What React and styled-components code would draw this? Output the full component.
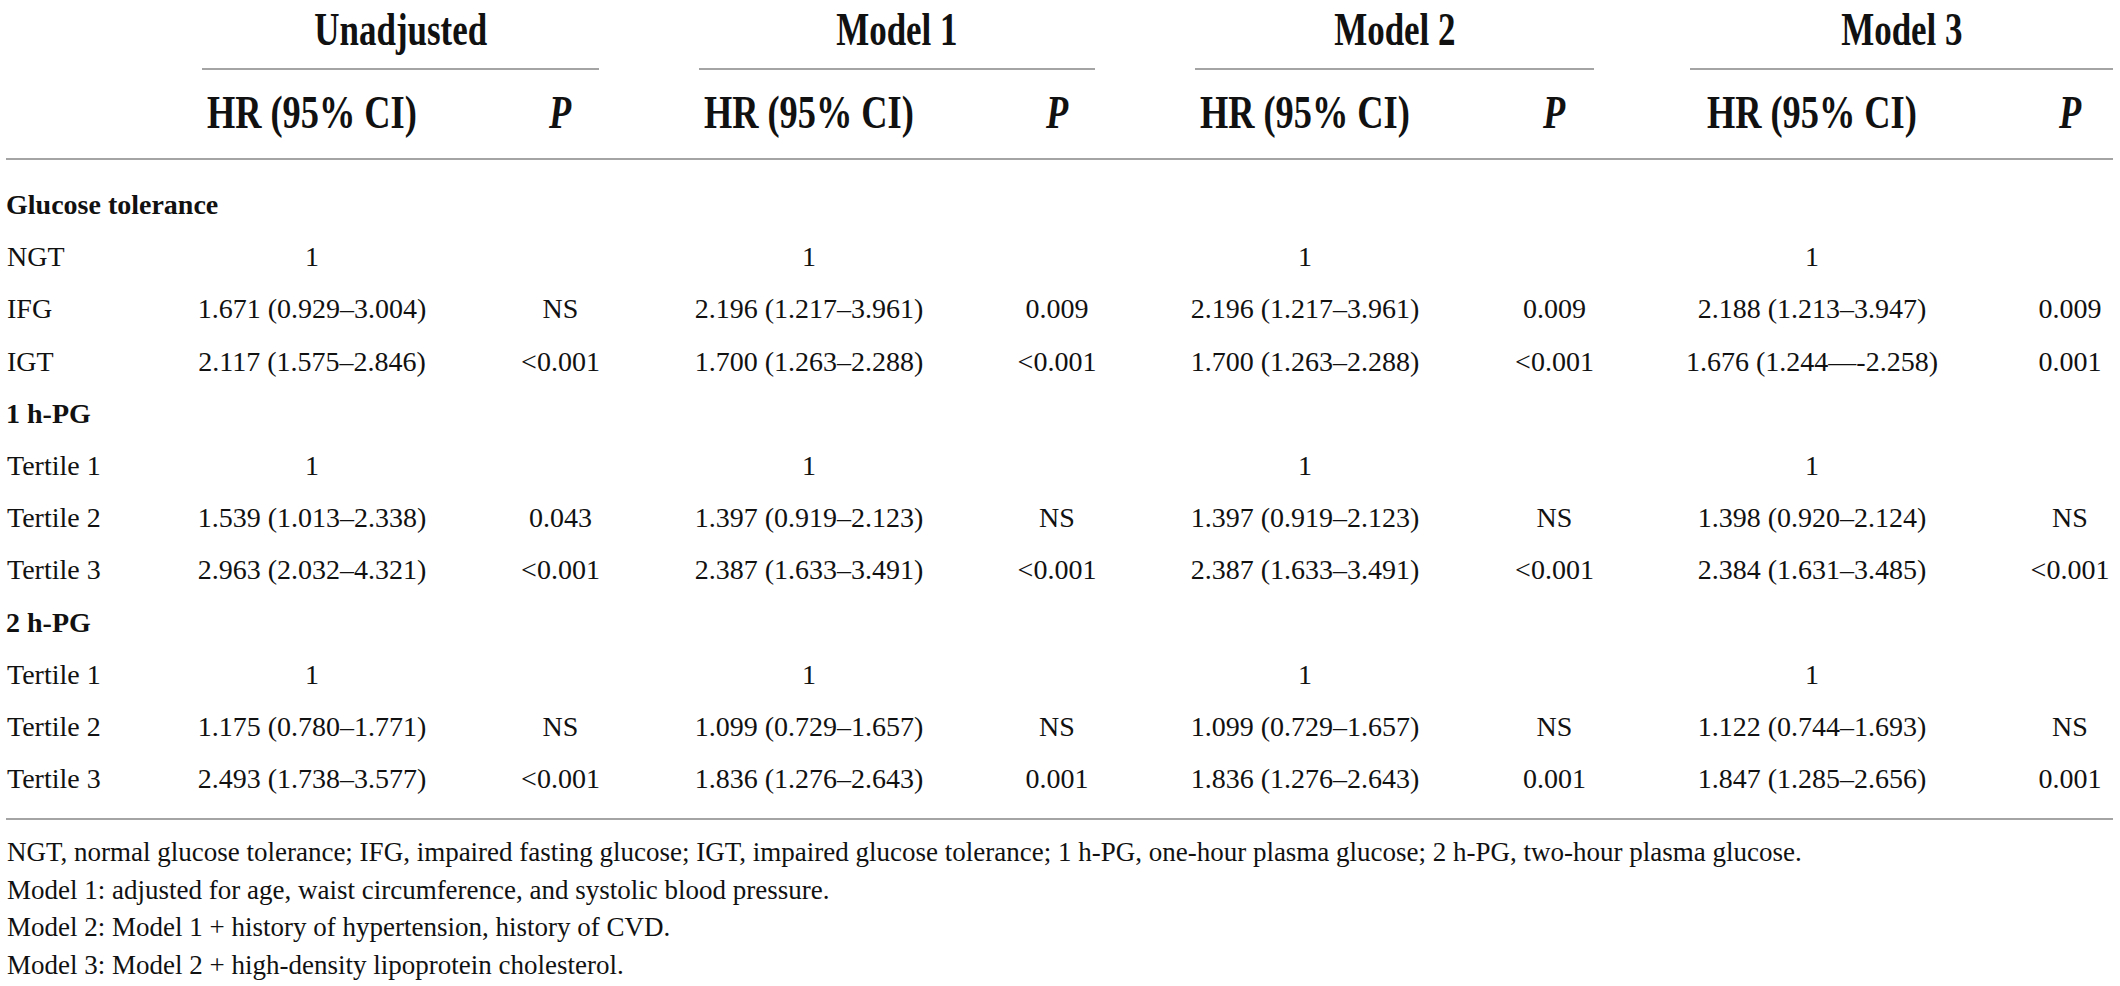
import React from 'react';
import styled, { createGlobalStyle } from 'styled-components';

const ink = '#111';
const rule = '#a4a4a4';
const serif = `"Liberation Serif", "Times New Roman", serif`;

const GlobalStyle = createGlobalStyle`
  html, body {
    margin: 0;
    padding: 0;
    background: #fff;
    overflow: hidden;
  }
  body {
    font-family: ${ serif };
    color: ${ ink };
  }
`;

const Page = styled.div`
  width: 2120px;
  box-sizing: border-box;
  padding: 0 7px 0 6px;
`;

const Table = styled.div`
  display: grid;
  grid-template-columns: 146px 320px 177px 320px 176px 320px 179px 336px 133px;
  font-size: 28px;
  white-space: nowrap;
`;

const Corner = styled.div`
  grid-row: span 2;
`;

const GroupHead = styled.div`
  grid-column: span 2;
  margin: ${ (p) => (p.$last ? '0 0 0 46px' : '0 50px') };
  height: 68px;
  border-bottom: 2px solid ${ rule };
  display: flex;
  justify-content: center;
  align-items: flex-start;
`;

const GroupTitle = styled.span`
  display: inline-block;
  font-size: 46px;
  font-weight: 700;
  line-height: 60px;
  transform: scaleX(0.76);
`;

const ColHead = styled.div`
  height: 88px;
  box-sizing: border-box;
  display: flex;
  justify-content: center;
  align-items: center;
  padding: 0 0 3px ${ (p) => (p.$edge ? '47px' : '0') };
`;

const ColTitle = styled.span`
  display: inline-block;
  font-size: 46px;
  font-weight: 700;
  font-style: ${ (p) => (p.$italic ? 'italic' : 'normal') };
  transform: scaleX(0.79);
`;

const FullRule = styled.div`
  grid-column: 1 / -1;
  height: 2px;
  background: ${ rule };
  margin: ${ (p) => p.$space };
`;

const Body = styled.div`
  grid-column: 1 / -1;
  display: grid;
  grid-template-columns: subgrid;
  padding-top: 19px;
`;

const Section = styled.div`
  grid-column: 1 / -1;
  font-weight: 700;
  line-height: 52.2px;
`;

const Label = styled.div`
  line-height: 52.2px;
  padding-left: 1px;
`;

const Cell = styled.div`
  line-height: 52.2px;
  text-align: center;
  padding-left: ${ (p) => (p.$edge ? '47px' : '0') };
`;

const Notes = styled.div`
  padding: 14px 0 0 1px;
  font-size: 27px;
  line-height: 37.5px;
`;

const Note = styled.p`
  margin: 0;
  white-space: nowrap;
`;

const groups = ['Unadjusted', 'Model 1', 'Model 2', 'Model 3'];
const ones = ['1', '', '1', '', '1', '', '1', ''];

const rows = [
  { section: 'Glucose tolerance' },
  { label: 'NGT', vals: ones },
  { label: 'IFG', vals: ['1.671 (0.929–3.004)', 'NS', '2.196 (1.217–3.961)', '0.009', '2.196 (1.217–3.961)', '0.009', '2.188 (1.213–3.947)', '0.009'] },
  { label: 'IGT', vals: ['2.117 (1.575–2.846)', '<0.001', '1.700 (1.263–2.288)', '<0.001', '1.700 (1.263–2.288)', '<0.001', '1.676 (1.244—-2.258)', '0.001'] },
  { section: '1 h-PG' },
  { label: 'Tertile 1', vals: ones },
  { label: 'Tertile 2', vals: ['1.539 (1.013–2.338)', '0.043', '1.397 (0.919–2.123)', 'NS', '1.397 (0.919–2.123)', 'NS', '1.398 (0.920–2.124)', 'NS'] },
  { label: 'Tertile 3', vals: ['2.963 (2.032–4.321)', '<0.001', '2.387 (1.633–3.491)', '<0.001', '2.387 (1.633–3.491)', '<0.001', '2.384 (1.631–3.485)', '<0.001'] },
  { section: '2 h-PG' },
  { label: 'Tertile 1', vals: ones },
  { label: 'Tertile 2', vals: ['1.175 (0.780–1.771)', 'NS', '1.099 (0.729–1.657)', 'NS', '1.099 (0.729–1.657)', 'NS', '1.122 (0.744–1.693)', 'NS'] },
  { label: 'Tertile 3', vals: ['2.493 (1.738–3.577)', '<0.001', '1.836 (1.276–2.643)', '0.001', '1.836 (1.276–2.643)', '0.001', '1.847 (1.285–2.656)', '0.001'] },
];

const notes = [
  'NGT, normal glucose tolerance; IFG, impaired fasting glucose; IGT, impaired glucose tolerance; 1 h-PG, one-hour plasma glucose; 2 h-PG, two-hour plasma glucose.',
  'Model 1: adjusted for age, waist circumference, and systolic blood pressure.',
  'Model 2: Model 1 + history of hypertension, history of CVD.',
  'Model 3: Model 2 + high-density lipoprotein cholesterol.',
];

const App = () => (
  <Page>
    <GlobalStyle />
    <Table>
      <Corner />
      {groups.map((g, i) => (
        <GroupHead key={g} $last={i === groups.length - 1}>
          <GroupTitle>{g}</GroupTitle>
        </GroupHead>
      ))}
      {groups.map((g, i) => (
        <React.Fragment key={g}>
          <ColHead><ColTitle>HR (95% CI)</ColTitle></ColHead>
          <ColHead $edge={i === groups.length - 1}><ColTitle $italic>P</ColTitle></ColHead>
        </React.Fragment>
      ))}
      <FullRule $space="0" />
      <Body>
        {rows.map((r, i) => (r.section ? (
          <Section key={i}>{r.section}</Section>
        ) : (
          <React.Fragment key={i}>
            <Label>{r.label}</Label>
            {r.vals.map((v, j) => (
              <Cell key={j} $edge={j === r.vals.length - 1}>{v}</Cell>
            ))}
          </React.Fragment>
        )))}
      </Body>
      <FullRule $space="12.6px 0 0" />
    </Table>
    <Notes>
      {notes.map((n) => <Note key={n}>{n}</Note>)}
    </Notes>
  </Page>
);

export default App;
